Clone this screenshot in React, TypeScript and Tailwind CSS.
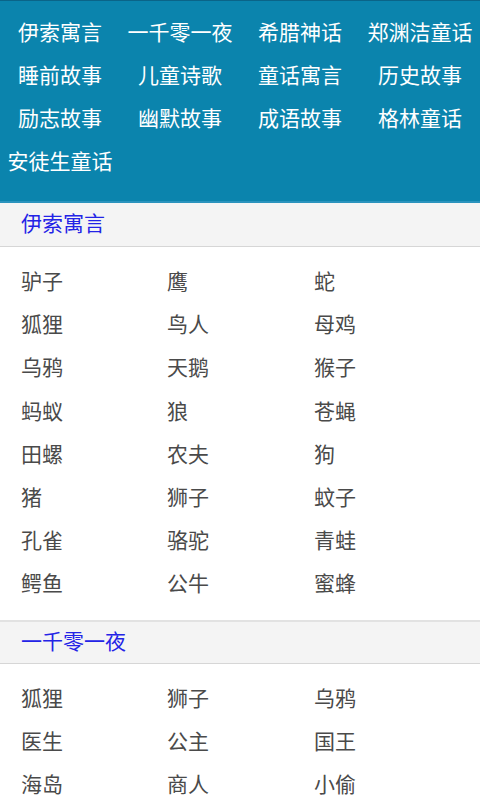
import React from "react";

const categories = [
  "伊索寓言", "一千零一夜", "希腊神话", "郑渊洁童话",
  "睡前故事", "儿童诗歌", "童话寓言", "历史故事",
  "励志故事", "幽默故事", "成语故事", "格林童话",
  "安徒生童话",
];

const sections = [
  {
    title: "伊索寓言",
    items: [
      "驴子", "鹰", "蛇",
      "狐狸", "鸟人", "母鸡",
      "乌鸦", "天鹅", "猴子",
      "蚂蚁", "狼", "苍蝇",
      "田螺", "农夫", "狗",
      "猪", "狮子", "蚊子",
      "孔雀", "骆驼", "青蛙",
      "鳄鱼", "公牛", "蜜蜂",
    ],
  },
  {
    title: "一千零一夜",
    items: ["狐狸", "狮子", "乌鸦", "医生", "公主", "国王", "海岛", "商人", "小偷"],
  },
];

const font = { fontFamily: '"Noto Sans CJK SC", "Noto Sans", sans-serif' };

export default function App() {
  return (
    <div className="w-[480px] h-[800px] overflow-hidden bg-white" style={font}>
      {/* category nav */}
      <nav className="bg-[#0b84ad] border-t border-[#0a6488] border-b-2 border-b-[#2a93bd] pt-[9px] pb-[19px]">
        <div className="grid grid-cols-4">
          {categories.map((c) => (
            <div key={c} className="h-[43px] flex items-center justify-center text-[21px] text-white leading-none whitespace-nowrap">
              {c}
            </div>
          ))}
        </div>
      </nav>

      {sections.map((s, i) => (
        <section key={s.title}>
          <div
            className={
              "h-[44px] bg-[#f4f4f4] border-b border-[#d6d6d6] flex items-center pl-[21px] pb-[4px] text-[21px] text-[#2323e6] leading-none " +
              (i > 0 ? "border-t-2 border-t-[#e2e2e2]" : "")
            }
          >
            {s.title}
          </div>
          <div className="grid grid-cols-[146px_147px_1fr] pl-[21px] pt-[12px] pb-[15px]">
            {s.items.map((it, j) => (
              <div key={j} className="h-[43.2px] flex items-center text-[21px] text-[#4a4a4a] leading-none">
                {it}
              </div>
            ))}
          </div>
        </section>
      ))}
    </div>
  );
}
